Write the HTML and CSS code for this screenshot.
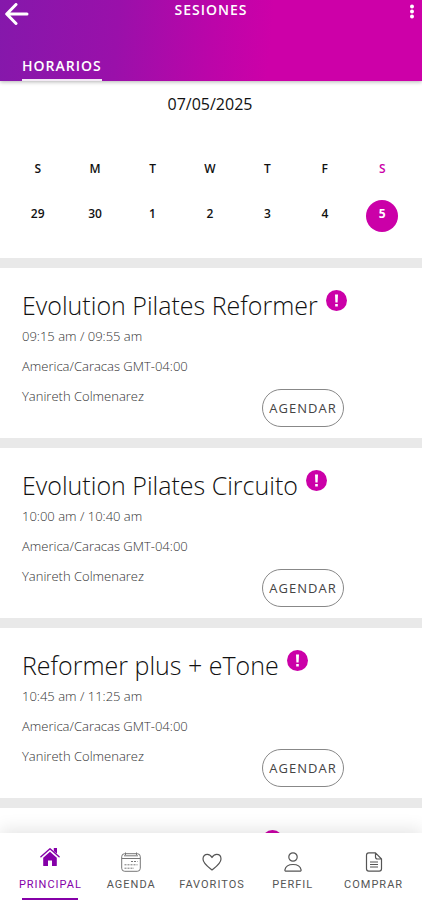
FILE: index.html
```html
<!DOCTYPE html>
<html lang="es">
<head>
<meta charset="utf-8">
<meta name="viewport" content="width=device-width, initial-scale=1">
<title>Sesiones</title>
<link rel="stylesheet" href="styles.css">
</head>
<body>
<header class="topbar">
  <div class="topbar-row">
    <button class="icon-button" type="button" aria-label="Volver">
      <svg width="24" height="22" viewBox="0 0 24 22" fill="none" stroke="#fff" stroke-width="3" stroke-linecap="round" stroke-linejoin="round"><path d="M22 11H2M11 1.500L1.700 11l9.300 9.500"/></svg>
    </button>
    <h1 class="topbar-title">SESIONES</h1>
    <button class="icon-button menu" type="button" aria-label="Menú">
      <svg width="6" height="16" viewBox="0 0 6 16" fill="#fff"><circle cx="3" cy="3.500" r="2"/><circle cx="3" cy="8.500" r="2"/><circle cx="3" cy="13.500" r="2"/></svg>
    </button>
  </div>
  <nav class="tabs"><a class="tab" href="#horarios">HORARIOS</a></nav>
</header>

<main class="content" id="horarios">
  <section class="calendar">
    <p class="date">07/05/2025</p>
    <table class="week">
      <thead>
        <tr><th>S</th><th>M</th><th>T</th><th>W</th><th>T</th><th>F</th><th class="current">S</th></tr>
      </thead>
      <tbody>
        <tr>
          <td><button class="day" type="button">29</button></td>
          <td><button class="day" type="button">30</button></td>
          <td><button class="day" type="button">1</button></td>
          <td><button class="day" type="button">2</button></td>
          <td><button class="day" type="button">3</button></td>
          <td><button class="day" type="button">4</button></td>
          <td><button class="day selected" type="button">5</button></td>
        </tr>
      </tbody>
    </table>
  </section>

  <article class="session">
    <div class="session-head">
      <h2 class="session-title">Evolution Pilates Reformer</h2>
      <svg class="badge" viewBox="0 0 21 21"><circle cx="10.500" cy="10.500" r="10.500" fill="#cb00a8"/><path d="M9 4.500h3l-.4 8H9.400zM9.200 14h2.600v2.500H9.200z" fill="#fff"/></svg>
    </div>
    <div class="session-body">
      <div class="details"><p>09:15 am / 09:55 am</p><p>America/Caracas GMT-04:00</p><p>Yanireth Colmenarez</p></div>
      <button class="book" type="button">AGENDAR</button>
    </div>
  </article>

  <article class="session">
    <div class="session-head">
      <h2 class="session-title">Evolution Pilates Circuito</h2>
      <svg class="badge" viewBox="0 0 21 21"><circle cx="10.500" cy="10.500" r="10.500" fill="#cb00a8"/><path d="M9 4.500h3l-.4 8H9.400zM9.200 14h2.600v2.500H9.200z" fill="#fff"/></svg>
    </div>
    <div class="session-body">
      <div class="details"><p>10:00 am / 10:40 am</p><p>America/Caracas GMT-04:00</p><p>Yanireth Colmenarez</p></div>
      <button class="book" type="button">AGENDAR</button>
    </div>
  </article>

  <article class="session">
    <div class="session-head">
      <h2 class="session-title">Reformer plus + eTone</h2>
      <svg class="badge" viewBox="0 0 21 21"><circle cx="10.500" cy="10.500" r="10.500" fill="#cb00a8"/><path d="M9 4.500h3l-.4 8H9.400zM9.200 14h2.600v2.500H9.200z" fill="#fff"/></svg>
    </div>
    <div class="session-body">
      <div class="details"><p>10:45 am / 11:25 am</p><p>America/Caracas GMT-04:00</p><p>Yanireth Colmenarez</p></div>
      <button class="book" type="button">AGENDAR</button>
    </div>
  </article>

  <article class="session">
    <div class="session-head pending">
      <svg class="badge" viewBox="0 0 21 21"><circle cx="10.500" cy="10.500" r="10.500" fill="#cb00a8"/></svg>
    </div>
  </article>
</main>

<nav class="bottom-nav">
  <a class="nav-item active" href="#principal">
    <svg class="nav-icon" viewBox="0 0 20 20"><path d="M10 4.800L3.200 10.700V18.500q0 .5.500.5H8v-5.500h4V19h4.300q.5 0 .5-.5V10.700z" fill="#8500a8"/><path d="M.9 9.700L10 1.700l9.100 8" fill="none" stroke="#8500a8" stroke-width="1.400" stroke-linecap="round" stroke-linejoin="round"/><path d="M13.800 1H17v5.800l-3.200-2.900z" fill="#8500a8"/></svg>
    <span>PRINCIPAL</span>
  </a>
  <a class="nav-item" href="#agenda">
    <svg class="nav-icon" viewBox="0 0 20 20" fill="none" stroke="#777"><rect x=".7" y="1.700" width="18.600" height="17.600" rx="3"/><path d="M.8 6.500h18.400M3 3.800h14M4.500.5v2.500M15.500.5v2.500"/><path d="M10 9.500h6.500M3.500 12.800h13M3.500 16.200H13" stroke-dasharray="2 1"/></svg>
    <span>AGENDA</span>
  </a>
  <a class="nav-item" href="#favoritos">
    <svg class="nav-icon" viewBox="0 0 20 20" fill="none" stroke="#555" stroke-width="1.200" stroke-linejoin="round"><path d="M10 18C7.500 15.800 1 11.500 1 6.900 1 4 3 2.300 5.300 2.300c2 0 3.700 1.200 4.700 3.200 1-2 2.700-3.200 4.700-3.200C17 2.300 19 4 19 6.900 19 11.500 12.500 15.800 10 18z"/></svg>
    <span>FAVORITOS</span>
  </a>
  <a class="nav-item" href="#perfil">
    <svg class="nav-icon" viewBox="0 0 20 20" fill="none" stroke="#555" stroke-width="1.200" stroke-linejoin="round"><circle cx="10" cy="5" r="4.200"/><path d="M3.200 19.200c-.9 0-1.500-.6-1.300-1.400.7-3.600 3.900-5.300 8.100-5.300s7.400 1.700 8.100 5.300c.2.800-.4 1.400-1.300 1.400z"/></svg>
    <span>PERFIL</span>
  </a>
  <a class="nav-item" href="#comprar">
    <svg class="nav-icon" viewBox="0 0 20 20" fill="none" stroke="#555" stroke-width="1.200" stroke-linejoin="round"><path d="M11.500.9H4.800C3.400.9 2.500 1.800 2.500 3.200v13.600c0 1.400.9 2.300 2.300 2.300h10.400c1.400 0 2.300-.9 2.300-2.300V7zM11.500.9V5c0 1.300.7 2 2 2h4"/><path d="M6 10h8M6 12.500h8M6 15h8" stroke-width="1"/></svg>
    <span>COMPRAR</span>
  </a>
</nav>
</body>
</html>
```
FILE: styles.css
```css
* {
  box-sizing: border-box;
}

body {
  display: flex;
  flex-direction: column;
  height: 100vh;
  margin: 0;
  overflow: hidden;
  background: #fff;
  color: #111;
  font-family: "Open Sans", "Noto Sans", sans-serif;
}

h1, h2, p {
  margin: 0;
}

button {
  padding: 0;
  border: 0;
  background: none;
  color: inherit;
  font: inherit;
}

a {
  color: inherit;
  text-decoration: none;
}

svg {
  display: block;
}

.topbar {
  position: relative;
  z-index: 1;
  display: flex;
  flex-direction: column;
  justify-content: space-between;
  flex: none;
  height: 81px;
  background: linear-gradient(95deg, #8518ab 0%, #9a10aa 28%, #bb05a9 50%, #cd00a8 64%);
  box-shadow: 0 1px 4px rgba(0, 0, 0, 0.3);
  color: #fff;
}

.topbar-row {
  display: grid;
  grid-template-columns: 1fr auto 1fr;
  align-items: start;
  padding: 0 7px;
}

.icon-button {
  justify-self: start;
  margin-left: -2px;
  padding-top: 3px;
}

.icon-button.menu {
  justify-self: end;
}

.topbar-title {
  font-size: 14px;
  font-weight: 600;
  line-height: 19px;
  letter-spacing: 1px;
}

.tabs {
  display: flex;
  padding: 0 22px;
}

.tab {
  border-bottom: 2px solid #f3e9f5;
  font-size: 14px;
  font-weight: 600;
  line-height: 26px;
  letter-spacing: 1px;
}

.content {
  flex: 1;
  min-height: 0;
  overflow: hidden;
}

.calendar {
  padding: 12px 11px 26px 9px;
}

.date {
  font-size: 16px;
  line-height: 22px;
  text-align: center;
}

.week {
  width: 100%;
  margin-top: 44px;
  border-collapse: collapse;
  table-layout: fixed;
  font-size: 12px;
  font-weight: 600;
  text-align: center;
}

.week th {
  height: 20px;
  padding: 0;
  font-weight: 600;
  line-height: 20px;
}

.week td {
  padding: 21px 0 0;
}

.week .current {
  color: #cb00a8;
}

.day {
  width: 32px;
  height: 32px;
  padding-bottom: 6px;
  border-radius: 50%;
}

.day.selected {
  background: #cb00a8;
  color: #fff;
  font-weight: 700;
}

.session {
  height: 180px;
  padding: 22px 22px 0;
  border-top: 10px solid #e9e9e9;
}

.session-head {
  display: flex;
  gap: 8px;
}

.session-head.pending {
  padding-left: 240px;
}

.session-title {
  font-size: 25px;
  font-weight: 300;
  line-height: 30px;
}

.badge {
  width: 21px;
  height: 21px;
}

.session-body {
  display: flex;
  margin-top: 1px;
}

.details {
  flex: 0 0 240px;
  color: #333;
  font-size: 13px;
  font-weight: 300;
  line-height: 30px;
}

.book {
  align-self: flex-end;
  width: 82px;
  height: 38px;
  margin-bottom: -16px;
  border: 1px solid #888;
  border-radius: 19px;
  color: #444;
  font-size: 13px;
  letter-spacing: 1px;
}

.bottom-nav {
  position: relative;
  display: grid;
  grid-template-columns: repeat(5, 1fr);
  flex: none;
  height: 67px;
  padding: 0 8px 0 10px;
  background: #fff;
  box-shadow: 0 -4px 16px rgba(0, 0, 0, 0.1);
}

.nav-item {
  display: flex;
  flex-direction: column;
  align-items: center;
  justify-content: flex-end;
  gap: 5px;
  color: #555;
  font-family: Roboto, sans-serif;
  font-size: 11px;
  line-height: 16px;
  letter-spacing: 1px;
}

.nav-item span {
  padding-bottom: 7px;
}

.nav-icon {
  width: 20px;
  height: 20px;
}

.nav-item.active {
  gap: 0;
  color: #8500a8;
}

.nav-item.active span {
  padding: 10px 0 5px;
}

.nav-item.active::after {
  width: 56px;
  height: 2px;
  background: #8500a8;
  content: "";
}
```
